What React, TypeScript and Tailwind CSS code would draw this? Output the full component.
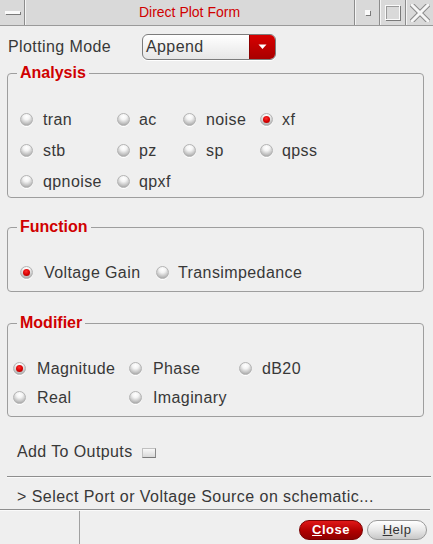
import React from "react";

function Radio({ on = false }: { on?: boolean }) {
  return (
    <span className="relative inline-flex w-[13px] h-[13px] shrink-0 items-center justify-center rounded-full border border-[#b4b4b4] bg-[radial-gradient(circle_at_50%_25%,#ffffff_0%,#f4f4f4_30%,#bcbcbc_72%,#8e8e8e_100%)] shadow-[0_1px_0_#ffffff]">
      {on && (
        <span className="w-[7px] h-[7px] rounded-full bg-[radial-gradient(circle_at_45%_35%,#ff3030_0%,#d40000_55%,#9a0000_100%)]" />
      )}
    </span>
  );
}

function Opt({ label, on = false, gap = "gap-[10px]" }: { label: string; on?: boolean; gap?: string }) {
  return (
    <div className={`flex items-center ${gap}`}>
      <Radio on={on} />
      <span>{label}</span>
    </div>
  );
}

function Group({ title, className, children }: { title: string; className?: string; children: React.ReactNode }) {
  return (
    <fieldset className={`border border-[#9e9e9e] rounded-[4px] mr-[2px] ${className ?? ""}`}>
      <legend className="ml-[9px] px-[3px] font-bold text-[#d00000] leading-[18px] tracking-normal">{title}</legend>
      {children}
    </fieldset>
  );
}

export default function App() {
  return (
    <div
      className="w-[433px] h-[544px] bg-[#efefef] flex flex-col overflow-hidden text-[16px] text-[#383838] tracking-[0.4px]"
      style={{ fontFamily: '"Liberation Sans", Arial, sans-serif' }}
    >
      {/* Title bar */}
      <div className="h-[26px] shrink-0 flex bg-[#d9d9d9] border-b border-[#9a9a9a]">
        <div className="w-[25px] flex items-center justify-center border-r border-[#8c8c8c] shadow-[1px_0_0_#f4f4f4]">
          <span className="block w-[15px] h-[3px] bg-[#fafafa] shadow-[1px_1px_0_#7a7a7a]" />
        </div>
        <div className="flex-1 flex items-center justify-center text-[14px] tracking-normal text-[#d00000]">
          Direct Plot Form
        </div>
        <div className="w-[25px] flex items-center justify-center border-l border-[#8c8c8c] shadow-[inset_1px_0_0_#f4f4f4]">
          <span className="block w-[5px] h-[5px] bg-[#fafafa] shadow-[1px_1px_0_#7a7a7a] -mt-[1px]" />
        </div>
        <div className="w-[26px] flex items-center justify-center border-l border-[#8c8c8c] shadow-[inset_1px_0_0_#f4f4f4]">
          <span className="block w-[15px] h-[15px] border border-[#fafafa] shadow-[1px_1px_0_#7a7a7a,inset_1px_1px_0_#9a9a9a]" />
        </div>
        <div className="w-[28px] flex items-center justify-center border-l border-[#8c8c8c] shadow-[inset_1px_0_0_#f4f4f4]">
          <svg width="20" height="18" viewBox="0 0 20 18">
            <path d="M2 1 L18 17 M18 1 L2 17" stroke="#8a8a8a" strokeWidth="5" strokeLinecap="square" fill="none" />
            <path d="M2 1 L18 17 M18 1 L2 17" stroke="#f6f6f6" strokeWidth="3" strokeLinecap="square" fill="none" />
          </svg>
        </div>
      </div>

      {/* Body */}
      <div className="px-[7px] flex flex-col">
        <div className="mt-[8px] h-[26px] flex items-center">
          <span className="w-[135px] pl-[1px]">Plotting Mode</span>
          <div className="w-[134px] h-[26px] flex rounded-[6px] border border-[#7c7c7c] overflow-hidden bg-[linear-gradient(#ffffff,#e6e6e6)] shadow-[0_1px_0_#ffffff]">
            <span className="flex-1 flex items-center pl-[3px]">Append</span>
            <span className="w-[26px] flex items-center justify-center bg-[linear-gradient(#d80000,#a80000)] border-l border-[#8a0000]">
              <svg width="9" height="6" viewBox="0 0 9 6">
                <path d="M0.5 0.5 L8.5 0.5 L4.5 5 Z" fill="#ffffff" />
              </svg>
            </span>
          </div>
        </div>

        <Group title="Analysis" className="mt-[4px]">
          <div className="pt-[22px] pl-[12px] grid grid-cols-[97px_66px_77px_auto] auto-rows-[31px] items-center">
            <Opt label="tran" />
            <Opt label="ac" gap="gap-[9px]" />
            <Opt label="noise" gap="gap-[10px]" />
            <Opt label="xf" on gap="gap-[9px]" />
            <Opt label="stb" />
            <Opt label="pz" gap="gap-[9px]" />
            <Opt label="sp" gap="gap-[10px]" />
            <Opt label="qpss" gap="gap-[9px]" />
            <Opt label="qpnoise" />
            <Opt label="qpxf" gap="gap-[9px]" />
          </div>
        </Group>

        <Group title="Function" className="mt-[20px]">
          <div className="pt-[21px] pb-[3px] pl-[12px] grid grid-cols-[136px_auto] auto-rows-[31px] items-center">
            <Opt label="Voltage Gain" on gap="gap-[11px]" />
            <Opt label="Transimpedance" gap="gap-[9px]" />
          </div>
        </Group>

        <Group title="Modifier" className="mt-[22px]">
          <div className="pt-[22px] pb-[4px] pl-[5px] grid grid-cols-[116px_110px_auto] auto-rows-[29px] items-center">
            <Opt label="Magnitude" on gap="gap-[11px]" />
            <Opt label="Phase" gap="gap-[11px]" />
            <Opt label="dB20" gap="gap-[10px]" />
            <Opt label="Real" gap="gap-[11px]" />
            <Opt label="Imaginary" gap="gap-[11px]" />
          </div>
        </Group>

        <div className="mt-[25px] h-[20px] pl-[10px] flex items-center gap-[9px]">
          <span>Add To Outputs</span>
          <span className="block w-[14px] h-[10px] mt-[1px] bg-[linear-gradient(#f8f8f8,#d8d8d8)] border border-[#c0c0c0] border-b-[#7a7a7a] border-r-[#8a8a8a]" />
        </div>
      </div>

      <div className="mt-[14px] ml-[7px] mr-[2px] h-[2px] shrink-0 border-t border-[#8e8e8e] border-b border-b-[#fafafa]" />

      <div className="h-[31px] shrink-0 pt-[6px] pl-[17px] flex items-center tracking-[0.45px]">
        &gt; Select Port or Voltage Source on schematic...
      </div>

      <div className="w-[430px] h-[2px] shrink-0 border-t border-[#8e8e8e] border-b border-b-[#fafafa]" />

      <div className="flex-1 flex">
        <div className="w-[80px] border-r border-[#a0a0a0]" />
        <div className="flex-1 flex justify-end items-start pt-[9px] pr-[6px] gap-[4px] tracking-normal text-[13px]">
          <button className="w-[64px] h-[20px] rounded-full border border-[#7a0000] bg-[linear-gradient(#e01818,#b00000_55%,#8e0000)] text-white font-bold flex items-center justify-center tracking-[0.5px]">
            <span><span className="underline">C</span>lose</span>
          </button>
          <button className="w-[60px] h-[20px] rounded-full border border-[#9a9a9a] bg-[linear-gradient(#ffffff,#e8e8e8_50%,#c8c8c8)] text-[#333] flex items-center justify-center tracking-[0.5px]">
            <span><span className="underline">H</span>elp</span>
          </button>
        </div>
      </div>
    </div>
  );
}
